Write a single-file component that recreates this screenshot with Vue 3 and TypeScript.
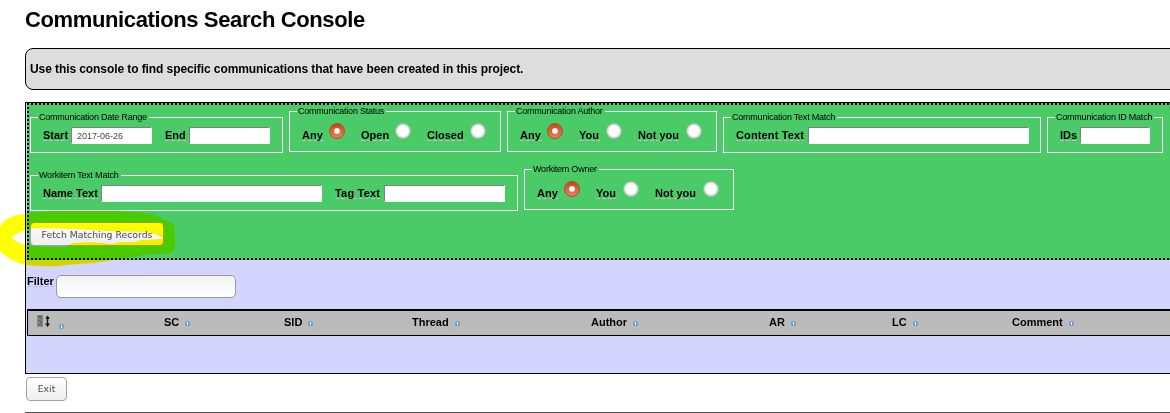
<script setup lang="ts">
interface Field {
  label: string
  kind: 'text' | 'radio'
  size: string
  value?: string
  checked?: boolean
}
interface Group {
  legend: string
  size: string
  fields: Field[]
}

const people: Field[] = [
  { label: 'Any', kind: 'radio', size: 'any', checked: true },
  { label: 'You', kind: 'radio', size: 'you' },
  { label: 'Not you', kind: 'radio', size: 'notyou' },
]

const rows: Group[][] = [
  [
    {
      legend: 'Communication Date Range',
      size: 'dates',
      fields: [
        { label: 'Start', kind: 'text', size: 'start', value: '2017-06-26' },
        { label: 'End', kind: 'text', size: 'end' },
      ],
    },
    {
      legend: 'Communication Status',
      size: 'status radios',
      fields: [
        { label: 'Any', kind: 'radio', size: 'any', checked: true },
        { label: 'Open', kind: 'radio', size: 'open' },
        { label: 'Closed', kind: 'radio', size: 'closed' },
      ],
    },
    { legend: 'Communication Author', size: 'people radios', fields: people },
    {
      legend: 'Communication Text Match',
      size: 'content-match',
      fields: [{ label: 'Content Text', kind: 'text', size: 'content' }],
    },
    {
      legend: 'Communication ID Match',
      size: 'id-match',
      fields: [{ label: 'IDs', kind: 'text', size: 'ids' }],
    },
  ],
  [
    {
      legend: 'Workitem Text Match',
      size: 'work-match',
      fields: [
        { label: 'Name Text', kind: 'text', size: 'name' },
        { label: 'Tag Text', kind: 'text', size: 'tag' },
      ],
    },
    { legend: 'Workitem Owner', size: 'people radios', fields: people },
  ],
]

const columns: string[] = ['SC', 'SID', 'Thread', 'Author', 'AR', 'LC', 'Comment']
</script>

<template>
  <main class="page">
    <h1>Communications Search Console</h1>
    <p class="intro">Use this console to find specific communications that have been created in this project.</p>

    <section class="panel">
      <form class="search" @submit.prevent>
        <div v-for="(row, r) in rows" :key="r" class="row">
          <fieldset v-for="group in row" :key="group.legend" :class="group.size">
            <legend>{{ group.legend }}</legend>
            <div class="fields">
              <div v-for="field in group.fields" :key="field.label" class="field" :class="field.size">
                <span class="label"><span class="word">{{ field.label }}</span></span>
                <span v-if="field.kind === 'text'" class="box">{{ field.value }}</span>
                <span v-else class="radio" :class="{ on: field.checked }"></span>
              </div>
            </div>
          </fieldset>
        </div>
        <button class="btn fetch" type="button">Fetch Matching Records</button>
      </form>

      <div class="filter">
        <span class="filter-label">Filter</span>
        <span class="filter-box"></span>
      </div>

      <div class="thead">
        <div class="cell tools">
          <svg class="sorter" width="14" height="13" viewBox="0 0 14 13">
            <rect x="0" y="0" width="6" height="12" fill="#858585" />
            <path d="M1.5 1.5h3M2.5 3.5h2M1.5 5.5h2M3 7.5h2M1.5 9.5h3" stroke="#505050" stroke-width="1" />
            <path d="M10.500 2v8" stroke="#111" stroke-width="1.400" />
            <path d="M8 4l2.500-3.500L13 4zM8 8.500l2.500 3.500L13 8.500z" fill="#111" />
            <path d="M8 3.500h1.500M12 3.500h1M8 9h1.500M12 9h1" stroke="#2fb02f" />
          </svg>
          <i class="info"></i>
        </div>
        <div v-for="name in columns" :key="name" class="cell">
          <span>{{ name }}</span><i class="info"></i>
        </div>
      </div>
    </section>

    <button class="btn exit" type="button">Exit</button>
    <hr>

    <svg class="marker" width="180" height="60" viewBox="0 208 180 60">
      <path
        fill="#ff0"
        fill-rule="evenodd"
        d="M0 227C3 219 12 215 26 214C34 212 42 212 55 211H115C126 212 138 212 147 213C156 215 163 219 167 221C173 222 175 226 175 231V248C174 253 168 254 160 254C140 255 121 259 101 262C85 264 72 264 60 266C48 267 36 266 26 265C14 262 5 257 0 251Z
           M11 237L25 230L34 228L75 229L108 231L146 232L155 234L162 237L162 239L142 240L134 242L120 242L112 244L91 242L73 243L65 247L31 246L25 245L17 242Z"
      />
    </svg>
  </main>
</template>

<style>
html,
body {
  margin: 0;
  background: #fff;
  overflow: hidden;
}
</style>

<style scoped>
.page {
  position: relative;
  box-sizing: border-box;
  width: 1170px;
  height: 413px;
  padding-left: 25px;
  overflow: hidden;
  background: #fff;
  color: #000;
  font-family: "Liberation Sans", Arial, sans-serif;
}
h1 {
  margin: 0;
  height: 48px;
  padding-top: 7px;
  box-sizing: border-box;
  font-size: 22px;
  line-height: 25px;
  letter-spacing: -0.38px;
  white-space: nowrap;
}
.intro {
  box-sizing: border-box;
  width: 1200px;
  height: 42px;
  margin: 0 0 12px;
  padding-left: 4px;
  border: 1px solid #000;
  border-radius: 8px;
  background: #ddd;
  font-size: 12px;
  font-weight: bold;
  line-height: 40px;
  letter-spacing: -0.085px;
}
.panel {
  box-sizing: border-box;
  width: 1200px;
  height: 272px;
  padding-left: 1px;
  border: 1px solid #000;
  background: #d4d5ff;
}
.search {
  box-sizing: border-box;
  height: 157px;
  padding: 4px 0 0 3px;
  background:
    repeating-linear-gradient(90deg, #000 0 2px, transparent 2px 4px) 0 0 / 100% 2px no-repeat,
    repeating-linear-gradient(90deg, #000 0 2px, transparent 2px 4px) 0 100% / 100% 2px no-repeat,
    repeating-linear-gradient(180deg, #000 0 2px, transparent 2px 4px) 0 0 / 2px 100% no-repeat,
    #4acb67;
}
.row {
  display: flex;
  align-items: flex-end;
  gap: 6px;
  height: 46px;
  margin-bottom: 12px;
}
fieldset {
  box-sizing: border-box;
  flex: none;
  height: 40px;
  min-width: 0;
  margin: 0;
  padding: 0;
  border: 1px solid #fff;
}
fieldset.radios {
  height: 45px;
  margin-bottom: 1px;
}
.dates { width: 253px; }
.status { width: 212px; }
.people { width: 210px; }
.content-match { width: 318px; }
.id-match { width: 116px; }
.work-match { width: 488px; }
legend {
  height: 9px;
  margin-left: 7px;
  padding: 0 2px 0 1px;
  font-size: 9px;
  line-height: 9px;
  letter-spacing: -0.22px;
  white-space: nowrap;
}
.fields {
  display: flex;
  gap: 13px;
  padding: 5px 0 0 12px;
}
.radios .fields {
  gap: 16px;
  padding-top: 7px;
}
.field { display: flex; }
.label {
  flex: none;
  padding-top: 2px;
  font-size: 11px;
  font-weight: bold;
  line-height: 12px;
  white-space: nowrap;
}
.radios .label { padding-top: 6px; }
.word {
  display: inline-block;
  height: 12px;
  background: repeating-linear-gradient(90deg, #c9b5c9 0 4px, transparent 4px 6px) 0 100% / 100% 1px no-repeat;
}
.radios .word { padding-right: 1.5px; }
.start .label { width: 28px; }
.end .label { width: 24px; }
.any .label, .you .label { width: 27px; }
.open .label { width: 34px; }
.closed .label { width: 43px; }
.notyou .label { width: 48px; }
.content .label { width: 72px; letter-spacing: 0.13px; }
.ids .label { width: 20px; }
.name .label { width: 58px; }
.tag .label { width: 49px; letter-spacing: 0.2px; }
.box {
  box-sizing: border-box;
  width: 81px;
  height: 17px;
  padding-left: 5px;
  border: 1px solid #fff;
  border-top-color: #808080;
  border-left-color: #808080;
  background: #fff;
  color: #444;
  font-size: 9px;
  line-height: 16px;
}
.content .box, .name .box { width: 221px; }
.ids .box { width: 70px; }
.tag .box { width: 121px; }
.radio {
  box-sizing: border-box;
  width: 16px;
  height: 16px;
  border: 1px solid #a9bcab;
  border-radius: 50%;
  background: radial-gradient(circle, #fff 0 4.500px, #d6d6d6 7px);
}
.radio.on {
  border-color: #a9512d;
  background: radial-gradient(circle, #fff 0 2px, #edb39b 3px, transparent 3.500px), linear-gradient(#c74719, #e98259);
}
.btn {
  box-sizing: border-box;
  display: block;
  margin: 0;
  padding: 0;
  border: 1px solid #a3a3a3;
  border-radius: 4px;
  background: linear-gradient(#fff, #ededed);
  color: #4c4c4c;
  font-family: "DejaVu Sans", sans-serif;
  font-size: 9.3px;
  white-space: nowrap;
}
.fetch {
  width: 134px;
  height: 24px;
  margin-top: -1px;
  line-height: 23px;
}
.exit {
  width: 41px;
  height: 24px;
  margin: 3px 0 0 1px;
  line-height: 22px;
}
.filter {
  display: flex;
  height: 49px;
}
.filter-label {
  width: 29px;
  height: 12px;
  margin-top: 15px;
  background: repeating-linear-gradient(90deg, #bdbdd0 0 4px, transparent 4px 6px) 0 100% / 27px 1px no-repeat;
  font-size: 11px;
  font-weight: bold;
  line-height: 12px;
}
.filter-box {
  box-sizing: border-box;
  width: 180px;
  height: 23px;
  margin-top: 15px;
  border: 1px solid #999;
  border-radius: 5px;
  background: linear-gradient(#f3f3f3, #fff);
}
.thead {
  box-sizing: border-box;
  display: grid;
  grid-template-columns: 127px 120px 128px 179px 178px 123px 120px 1fr;
  height: 27px;
  padding-left: 9px;
  border: 1px solid #000;
  border-top-width: 2px;
  background: #bbb;
  font-size: 11px;
  font-weight: bold;
  line-height: 12px;
}
.cell {
  display: flex;
  align-items: flex-start;
  gap: 6px;
  padding-top: 5px;
}
.info {
  width: 3px;
  height: 3px;
  margin-top: 5px;
  border: 1px solid #6c9bd0;
  border-radius: 1.5px;
  background: linear-gradient(90deg, #6c9bd0 0 1px, #fff 1px 2px, #6c9bd0 2px);
}
.tools {
  gap: 8px;
  padding-top: 4px;
}
.tools .info { margin-top: 9px; }
hr {
  width: 1200px;
  height: 1px;
  margin: 11px 0 0;
  border: 0;
  background: #555;
}
.marker {
  position: absolute;
  left: 0;
  top: 208px;
  mix-blend-mode: multiply;
  pointer-events: none;
}
</style>
